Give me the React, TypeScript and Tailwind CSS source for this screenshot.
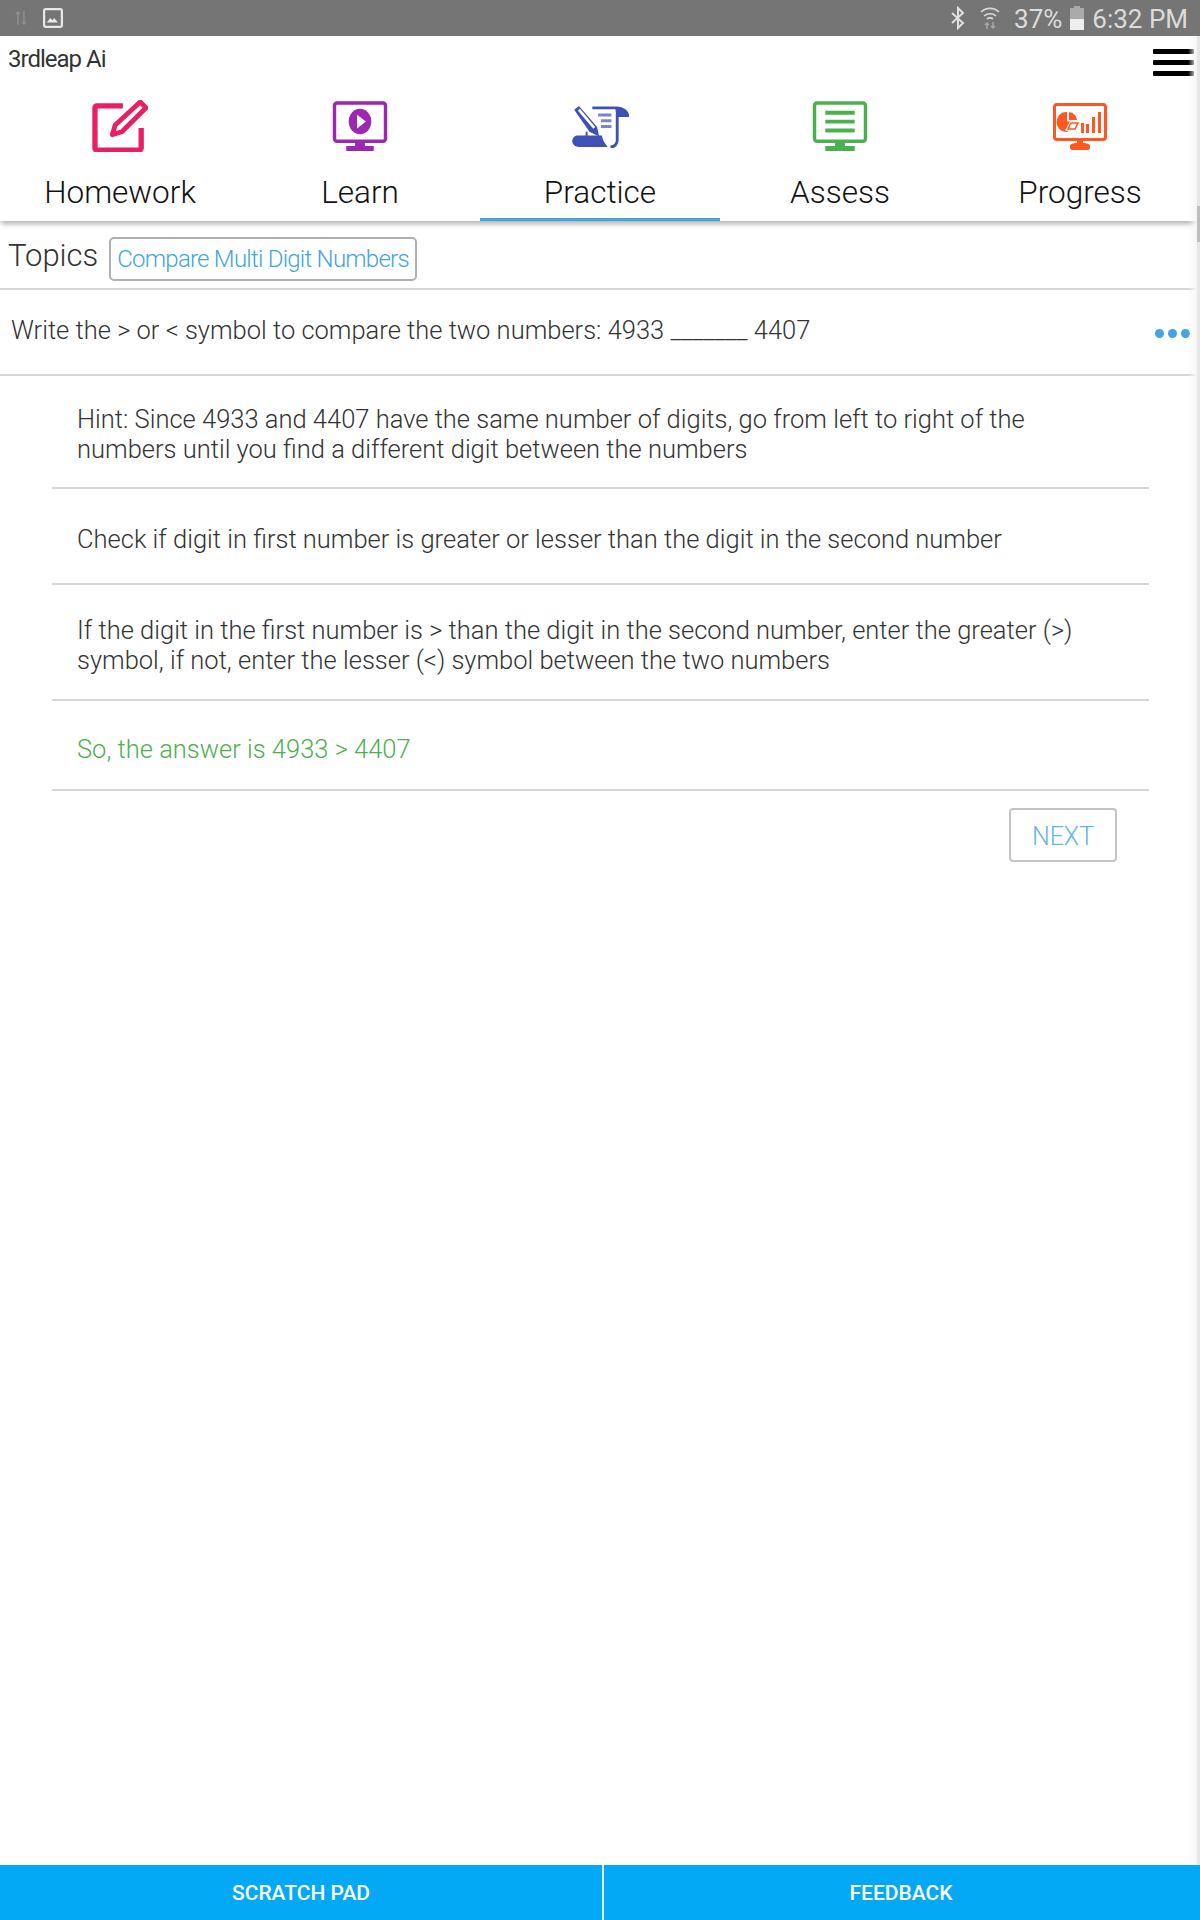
const roboto = "font-['Roboto',sans-serif]"

function HomeworkIcon() {
  return (
    <svg width="56" height="52" viewBox="0 0 58 54" fill="none" stroke="#e91e63">
      <path d="M32 6H5a2 2 0 0 0-2 2v42a2 2 0 0 0 2 2h44a2 2 0 0 0 2-2V29" strokeWidth="5.500" />
      <path d="M50 2l6 6-25 25-10 3 3-10z" strokeWidth="5" strokeLinejoin="round" />
    </svg>
  )
}

function LearnIcon() {
  return (
    <svg width="56" height="51" viewBox="0 0 56 52">
      <rect x="2" y="2" width="52" height="39" rx="2.5" fill="none" stroke="#9c27b0" strokeWidth="3.500" />
      <ellipse cx="28" cy="21" rx="11.500" ry="13" fill="#9c27b0" />
      <path d="M25 14l9 7-9 7z" fill="#fff" />
      <path d="M23 41h10v5h9v5H14v-5h9z" fill="#9c27b0" />
    </svg>
  )
}

function PracticeIcon() {
  return (
    <svg width="58" height="44" viewBox="0 0 60 46">
      <path d="M22 4h26c6 0 10 4 11 8H48v26c0 4-3 7-7 7" fill="none" stroke="#3f51b5" strokeWidth="3" />
      <path d="M46 4c6 0 10 3 13 9H47z" fill="#3f51b5" />
      <path d="M3 6l5-4 19 22 2 10-10-5z" fill="#3f51b5" />
      <path d="M7 7l2-2 16 19-2 2z" fill="#fff" />
      <path d="M13 33h2v-4h2v4h15c1 6 4 9 6 12H8c-5 0-7-4-7-6 0-4 3-6 6-6z" fill="#3f51b5" />
      <path d="M28 10h14v3H28zM31 16h11v3H31zM31 22h11v3H31z" fill="#7986cb" />
    </svg>
  )
}

function AssessIcon() {
  return (
    <svg width="56" height="51" viewBox="0 0 56 52">
      <rect x="2" y="2" width="52" height="39" rx="2.5" fill="none" stroke="#4caf50" strokeWidth="3.500" />
      <path d="M13 10h30v4H13zM13 19h30v4H13zM13 28h30v4H13z" fill="#4caf50" />
      <path d="M23 41h10v5h10v5H13v-5h10z" fill="#4caf50" />
    </svg>
  )
}

function ProgressIcon() {
  return (
    <svg width="54" height="47" viewBox="0 0 54 47">
      <rect x="1.500" y="1.500" width="51" height="35" rx="2.500" fill="none" stroke="#ff5722" strokeWidth="3" />
      <path d="M14 9a9.500 10 0 1 0 2 19.500l-4-1 5-9h-3z" fill="#ff5722" />
      <path d="M16 9a9 9 0 0 1 8 8h-8z" fill="#ff5722" />
      <path d="M15 26l3-6h7l-3 6z" fill="none" stroke="#ff5722" strokeWidth="1.500" />
      <path d="M28 20h3v10h-3zM33 21h3v9h-3zM39 14h3v16h-3zM45 9h3v21h-3z" fill="#ff5722" />
      <path d="M24 37h6v3c4 0 7 1 7 3v2c0 1-1 2-2 2H19c-1 0-2-1-2-2v-2c0-2 3-3 7-3z" fill="#ff5722" />
    </svg>
  )
}

const tabs = [
  { label: 'Homework', icon: <HomeworkIcon />, active: false },
  { label: 'Learn', icon: <LearnIcon />, active: false },
  { label: 'Practice', icon: <PracticeIcon />, active: true },
  { label: 'Assess', icon: <AssessIcon />, active: false },
  { label: 'Progress', icon: <ProgressIcon />, active: false },
]

function StatusBar() {
  return (
    <div className="h-9 bg-[#757575] flex items-center pl-[15px] pr-[12px] text-[#dcdcdc]">
      <svg width="12" height="16" viewBox="0 0 12 16" className="opacity-25">
        <path d="M3 15V2M1 4l2-2 2 2M9 1v13M7 12l2 2 2-2" fill="none" stroke="#ddd" strokeWidth="1.500" />
      </svg>
      <svg width="20" height="20" viewBox="0 0 18 18" className="ml-[16px]">
        <rect x="1" y="1" width="16" height="16" rx="1.500" fill="none" stroke="#e8e8e8" strokeWidth="2" />
        <path d="M3.500 13l3-4 2 2 1.500-2 3.500 4z" fill="#e8e8e8" />
      </svg>
      <div className="ml-auto flex items-center">
        <svg width="16" height="24" viewBox="0 0 16 24">
          <path d="M2 7l11 10-5 5V2l5 5L2 17" fill="none" stroke="#e0e0e0" strokeWidth="2" />
        </svg>
        <svg width="20" height="24" viewBox="0 0 20 24" className="ml-[14px]">
          <path d="M1 6a13 13 0 0 1 18 0M4 10a9 9 0 0 1 12 0M7 13a5 5 0 0 1 6 0" fill="none" stroke="#d8d8d8" strokeWidth="1.600" />
          <path d="M7 23v-6M5 19l2-2 2 2M13 16v6M11 20l2 2 2-2" fill="none" stroke="#a8a8a8" strokeWidth="1.500" />
        </svg>
        <span className="ml-[14px] mt-[2px] text-[26px] leading-none">37%</span>
        <svg width="14" height="24" viewBox="0 0 14 24" className="ml-[8px]">
          <path d="M4 0h6v2h4v22H0V2h4z" fill="#aaaaaa" />
          <path d="M0 13h14v11H0z" fill="#eeeeee" />
        </svg>
        <span className="ml-[8px] mt-[2px] text-[26px] leading-none">6:32 PM</span>
      </div>
    </div>
  )
}

function Hint({ children, green }: { children: React.ReactNode; green?: boolean }) {
  return (
    <div className={`border-b-[2px] border-[#d6d6d6] px-[25px] text-[25.500px] leading-[30px] font-light ${green ? 'text-[#4caf50]' : 'text-[#333333]'}`}>
      {children}
    </div>
  )
}

export default function App() {
  return (
    <div className={`${roboto} relative h-[1920px] bg-white flex flex-col overflow-hidden`}>
      <StatusBar />

      <div className="h-[59px] flex items-start justify-between pl-[8px] pr-[6px]">
        <span className="text-[#333333] text-[24px] leading-[28px] mt-[9px] tracking-[-1px]">3rdleap Ai</span>
        <div className="mt-[13px] w-[41px] flex flex-col gap-[6px]">
          <div className="h-[5px] bg-black rounded-[1px]" />
          <div className="h-[5px] bg-black rounded-[1px]" />
          <div className="h-[5px] bg-black rounded-[1px]" />
        </div>
      </div>

      <div className="h-[126px] grid grid-cols-5 shadow-[0_4px_5px_-1px_rgba(0,0,0,0.3)]">
        {tabs.map((tab) => (
          <div key={tab.label} className={`flex flex-col items-center ${tab.active ? 'border-b-[3px] border-[#42a5e0]' : ''}`}>
            <div className="h-[60px] mt-[1px] flex items-center justify-center">{tab.icon}</div>
            <div className="text-[31.500px] leading-[40px] font-light text-[#111111] mt-[17px]">{tab.label}</div>
          </div>
        ))}
      </div>

      <div className="h-[69px] flex items-center border-b-[2px] border-[#d6d6d6] pl-[8px]">
        <span className="text-[31px] font-light text-[#333333] leading-none mt-[2px]">Topics</span>
        <span className="ml-[11px] mt-[8px] h-[44px] flex items-center px-[6px] border-[2px] border-[#b0b0b0] rounded-[5px] text-[24px] font-light text-[#42a5e0] tracking-[-0.750px]">
          Compare Multi Digit Numbers
        </span>
      </div>

      <div className="h-[86px] flex items-center justify-between border-b-[2px] border-[#d6d6d6] pl-[11px] pr-[10px]">
        <span className="text-[25.500px] font-light text-[#333333] -mt-[4px]">
          Write the &gt; or &lt; symbol to compare the two numbers: 4933 _______ 4407
        </span>
        <div className="flex gap-[4px] mt-[3px]">
          <div className="w-[9px] h-[9px] rounded-full bg-[#42a5e0]" />
          <div className="w-[9px] h-[9px] rounded-full bg-[#42a5e0]" />
          <div className="w-[9px] h-[9px] rounded-full bg-[#42a5e0]" />
        </div>
      </div>

      <div className="mx-[52px] w-[1097px]">
        <Hint>
          <div className="pt-[28px] pb-[23px]">
            Hint: Since 4933 and 4407 have the same number of digits, go from left to right of the numbers until you find a different digit between the numbers
          </div>
        </Hint>
        <Hint>
          <div className="pt-[35px] pb-[29px]">
            Check if digit in first number is greater or lesser than the digit in the second number
          </div>
        </Hint>
        <Hint>
          <div className="pt-[30px] pb-[24px]">
            If the digit in the first number is &gt; than the digit in the second number, enter the greater (&gt;) symbol, if not, enter the lesser (&lt;) symbol between the two numbers
          </div>
        </Hint>
        <Hint green>
          <div className="pt-[33px] pb-[25px]">So, the answer is 4933 &gt; 4407</div>
        </Hint>
        <div className="flex justify-end pr-[32px] pt-[17px]">
          <button className="w-[108px] h-[54px] pt-[4px] border-[2px] border-[#c4c4c4] rounded-[4px] text-[25px] font-light text-[#64b5e6]">
            NEXT
          </button>
        </div>
      </div>

      <div className="mt-auto h-[55px] bg-[#03a9f4] flex text-white text-[21px] font-medium">
        <div className="w-[604px] flex items-center justify-center border-r-[2px] border-[#e0f4fd] pt-[2px]">SCRATCH PAD</div>
        <div className="flex-1 flex items-center justify-center pt-[2px] pr-[2px]">FEEDBACK</div>
      </div>

      {/* faded scroll edge down the right side */}
      <div className="absolute top-9 bottom-[55px] right-0 w-[12px] flex pointer-events-none">
        <div className="flex-1 bg-gradient-to-r from-transparent to-[#f6f6f6]" />
        <div className="w-[3px] bg-[#e6e6e6]">
          <div className="mt-[170px] h-[36px] bg-[#bdbdbd]" />
        </div>
      </div>
    </div>
  )
}
